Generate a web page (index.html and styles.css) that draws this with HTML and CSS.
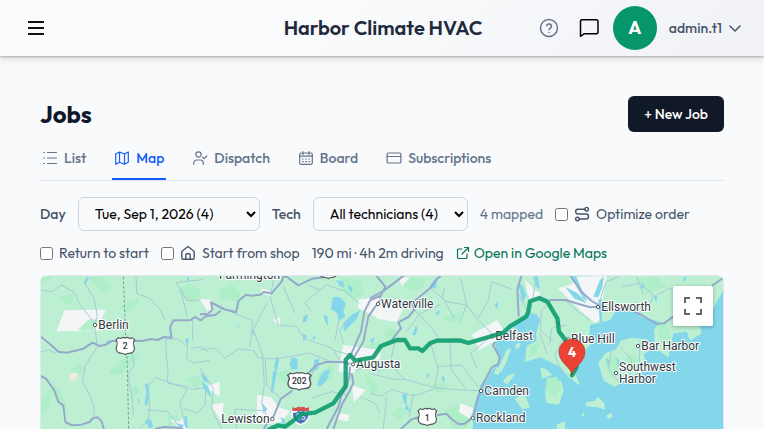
FILE: index.html
```html
<!DOCTYPE html>
<html lang="en">
<head>
<meta charset="utf-8">
<meta name="viewport" content="width=device-width, initial-scale=1">
<title>Jobs - Harbor Climate HVAC</title>
<link rel="stylesheet" href="styles.css">
</head>
<body>
<header class="topbar">
  <button class="icon-btn menu-btn" type="button" aria-label="Menu">
    <svg width="24" height="24" viewBox="0 0 24 24" fill="none" stroke="currentColor" stroke-width="2"><path d="M4 6h16M4 12h16M4 18h16"/></svg>
  </button>
  <div class="brand">Harbor Climate HVAC</div>
  <div class="account">
    <button class="icon-btn help" type="button" aria-label="Help">
      <svg width="20" height="20" viewBox="0 0 24 24" fill="none" stroke="currentColor" stroke-width="1.8" stroke-linecap="round" stroke-linejoin="round"><circle cx="12" cy="12" r="10.2"/><path d="M9 9.200a3.100 3.100 0 0 1 6 1c0 2-3 2.300-3 4M12 17.400h.01"/></svg>
    </button>
    <button class="icon-btn chat" type="button" aria-label="Messages">
      <svg width="24" height="24" viewBox="0 0 24 24" fill="none" stroke="currentColor" stroke-width="1.500" stroke-linejoin="round"><path d="M21 16.300a1.500 1.500 0 0 1-1.500 1.500H7L3.500 20.300V5.300A1.500 1.500 0 0 1 5 3.800h14.500A1.500 1.500 0 0 1 21 5.300z"/></svg>
    </button>
    <span class="avatar">A</span>
    <button class="user" type="button">admin.t1
      <svg width="14" height="14" viewBox="0 0 14 14" fill="none" stroke="currentColor" stroke-width="1.500" stroke-linecap="round" stroke-linejoin="round"><path d="M2 5l5 5 5-5"/></svg>
    </button>
  </div>
</header>

<main class="page">
  <div class="page-head">
    <h1>Jobs</h1>
    <button class="new-job" type="button">+ New Job</button>
  </div>

  <nav class="tabs">
    <a class="tab" href="#list">
      <svg class="icon" viewBox="0 0 14 14"><path d="M4.500 1.500h9M4.500 7h9M4.500 12.500h9M.7 1.500h.8M.7 7h.8M.7 12.500h.8"/></svg>List</a>
    <a class="tab active" href="#map" aria-current="page">
      <svg class="icon" viewBox="0 0 14 14"><path d="M.7 3L4.500 1l5 2 3.800-2v10.200L9.500 13.200l-5-2L.7 13.200zM4.500 1v10.200M9.500 3v10.200"/></svg>Map</a>
    <a class="tab" href="#dispatch">
      <svg class="icon" viewBox="0 0 14 14"><circle cx="5.500" cy="3.500" r="2.700"/><path d="M.7 13.300V12a3 3 0 0 1 3-3h3.600a3 3 0 0 1 3 3v1.300M9.600 6.200l1.500 1.500 2.700-2.700"/></svg>Dispatch</a>
    <a class="tab" href="#board">
      <svg class="icon" viewBox="0 0 14 14"><rect x=".7" y="2" width="12.600" height="11.300" rx="1.300"/><path d="M.7 5.200h12.600M4 .5v3M10 .5v3M3.500 8h.6M6.700 8h.6M9.900 8h.6M3.500 10.700h.6M6.700 10.700h.6M9.900 10.700h.6"/></svg>Board</a>
    <a class="tab" href="#subscriptions">
      <svg class="icon" viewBox="0 0 14 14"><rect x=".1" y="2" width="13.800" height="10" rx="1.300"/><path d="M.1 5.500h13.800"/></svg>Subscriptions</a>
  </nav>

  <form class="filters">
    <div class="field"><label for="day">Day</label>
      <select id="day" class="day"><option>Tue, Sep 1, 2026 (4)</option></select></div>
    <div class="field"><label for="tech">Tech</label>
      <select id="tech" class="tech"><option>All technicians (4)</option></select></div>
    <span class="muted">4 mapped</span>
    <label class="check"><input type="checkbox">
      <svg class="icon" viewBox="0 0 14 14"><circle cx="11.600" cy="2.200" r="1.800"/><circle cx="2.400" cy="12" r="1.800"/><path d="M9.800 2.200H3a2.400 2.400 0 0 0 0 4.800h8a2.500 2.500 0 0 1 0 5H4.200"/></svg>
      <span>Optimize order</span></label>
    <label class="check"><input type="checkbox"><span>Return to start</span></label>
    <label class="check"><input type="checkbox">
      <svg class="icon" viewBox="0 0 14 14"><path d="M.8 5.500L7 .5l6.200 5v6.500a1.300 1.300 0 0 1-1.300 1.300H2.100A1.300 1.300 0 0 1 .8 12zM4.800 13.300V8.700a1 1 0 0 1 1-1h2.400a1 1 0 0 1 1 1v4.600"/></svg>
      <span>Start from shop</span></label>
    <span class="driving">190 mi · 4h 2m driving</span>
    <a class="maps-link" href="#google-maps">
      <svg width="14" height="14" viewBox="0 0 14 14" fill="none" stroke="currentColor" stroke-width="1.200" stroke-linecap="round" stroke-linejoin="round"><path d="M8.500 1.500h4v4M12.500 1.500L6 8M6 3H2.500a1 1 0 0 0-1 1v7.500a1 1 0 0 0 1 1H10a1 1 0 0 0 1-1V8"/></svg>Open in Google Maps</a>
  </form>

  <section class="map" aria-label="Map">
    <svg class="map-canvas" viewBox="33 18 2046 440" preserveAspectRatio="xMinYMin meet">
      <defs>
        <g id="us-shield"><path d="M-21-25q5 4 10 1 6-4 11 0 6-4 11 0 5 3 10-1l7 7q-6 7-3 15 5 12-1 20-5 5-13 5-8 0-11 4-4-4-11-4-8 0-13-5-6-8-1-20 3-8-3-15z" fill="#fff" stroke="#555b60" stroke-width="3.500"/></g>
      </defs>
      <rect class="land" x="-100" y="-100" width="3000" height="2000"/>

      <!-- forest shading -->
      <g class="forest">
        <path d="M33 21h38l-15 12-23 8zM170 20h50l25 30-20 25-38-40zM90 82l38-12 6 22-26 12zM270 110l25-15 35-12-8 25-35 20zM50 365l25-20 18 20 15 35-25 5-8-25zM236 305l45-40 30-20 15 22-30 18-20 27-30 3zM33 385l30-10-5 40-25 20zM120 300l25-18 25 5-18 25-32 8z"/>
        <path d="M440 60l40-20 35 20-20 40-30-15zM470 330l30-15 20 25-22 16zM413 440l32-10-5 30-26 10zM300 360l20-15 10 20-20 14z"/>
        <g transform="translate(510)"><path d="M53 60l40-20 30 30-12 30-25-15-20 5zM420 20l60 12 15 40-38 15-30-24zM495 230l45-20v60l-40 10zM350 320l30-30 24-5-8 35-35 25zM230 310l30-12 20 28-30 12zM490 310l28 15 22 28-25 22z"/></g>
        <g transform="translate(1020)"><path d="M90 20l80 4-16 35-50-3zM40 185l24-14 23 25-35 20zM220 140l55-16-4 22-37 15zM180 350l32-14 25 15-26 19zM225 420l50-20 35 35-20 42h-45zM60 430l30-20 20 20-20 22z"/></g>
      </g>

      <!-- towns -->
      <g class="urban">
        <path d="M103 121l126-2-20 35-5 29-124 1zM511 87l32 3v38z"/>
        <g transform="translate(510)"><path d="M0 88l32 2-8 36zM185 55l33 10-8 12-28-8zM219 150l22-10-2 28zM474 90l66-12v67l-65-30zM430 225l110 15v28l-70 18-8 24-47-6zM15 350l45-15-2 45zM33 405l38-7-5 60zM172 374l42 8 20 28 36 14-28 32-52 8-20-30zM455 345l42 15-35 37zM415 430l33 4-5 20-28-5z"/></g>
        <g transform="translate(1020)"><path d="M0 90l40-5 58 36-18 35-58-10zM85 22h35l-24 27zM306 193l75-42 28 42-80 47zM270 400l40 15-10 30-33-18z"/></g>
        <path d="M420 448l28 8 17-20 8 41h-25z"/>
      </g>
      <path d="M177 148l30 2-18 34-16-4-12 4-18-4z" fill="#b4eecb"/>
      <path d="M122 307l22 3-7 23-20-2z" fill="#efe9df"/>

      <!-- sea -->
      <path class="water" d="M1510 88l-5 40-20 15-25 15-35 35-30 25 3 25 14 30-27 30-25 45-20 30-10 40-15 500h1500V18h-700z"/>
      <!-- coast and islands -->
      <g class="land" transform="translate(1530)">
        <path d="M-60 0H800V18H550V60L520 115 470 135 485 190 450 212 440 185 400 190 385 262 345 235 342 180 360 155 300 140 285 120 262 125 235 110 210 150 175 160 150 165 148 200 160 215 140 235 130 270 110 290 105 310 120 347 85 320 60 290 20 270 0 262-45 276-40 228-10 213-12 190 0 150-10 133-25 128-20 95-10 70-60 60z"/>
        <path d="M175 278l22-28 32-12 13-26 32-9 45 5 18 24-26 22 14 42-35 15-28 15-38 24-33-18zM140 397l25-5 8-12 20 20 2 20-20-8-38-3zM200 436l14-8 4 12-14 8zM124 434l8-6 2 14zM25 325l38 8 8 28-14 43-38-6-4-36zM50 464l24-10 3 50-25-6zM345 285l16 5-6 14zM0 293l15 3 22 18-30 12z"/>
        <path d="M-100 240l14-5-16 44-14 26-12-5 14-28zM-132 293l18-4-10 26-14-4zM-98 318l26-10-26 36-14-10zM-76 388l28-22 18 46-22 6zM-95 188l14-18 8 8-10 22zM-75 228l12-12 4 12-12 10z"/>
      </g>
      <g class="forest" transform="translate(1530)">
        <path d="M20 325l30-5 15 26-17 35-31-14zM190 270l40-14 8 37-28 25zM250 265l30-15 22 20-15 30-30-10zM350 165l30-12 12 47-28 25zM455 80l42-12-6 30-24 14zM-30 225l30-8-8 32-24 12zM290 25l60-5 30 30-60 20z"/>
      </g>
      <g class="urban">
        <path d="M1585 55l40-12 20-23 85-2-8 45-7 38 4 45-25 12-35-28-45-45zM1484 28l32 34 16 8-12 18-20 2-8-24z"/>
      </g>

      <!-- lakes and rivers -->
      <g class="water">
        <path d="M160 38l12-16h6l-10 20zM345 343l10-5 4 38-9 34-6-10 5-30zM344 450l18-2 8 20-12 8zM322 380l6 9 1 22zM465 210l12-8-4 26zM462 438h8l4 35h-8zM470 20l8 4-5 15zM433 458l30 8-8 8zM515 335l20 15 10 35-24-28zM228 214l14-5-2 8-14 5z"/>
        <g transform="translate(510)"><path d="M408 30l22 4 2 20-12-6zM442 45l18 8-8 16zM398 82l20-2 20 20-8 22 6 18-20 14-5-25-18-12zM370 135l12 3 2 30-8-12zM430 160l24-25 28-16-12 28-38 38zM310 140l14-8-4 20-12 8zM308 190l14 8-12 18zM335 205l12-10-2 14zM275 262l18 5v30l-18 2-6-16zM230 260l8 6-10 50-5-30zM220 300l10 10-12 60-6-5zM342 270l16-5-3 32-15 8zM350 345l18-38 22-10-10 35-20 18zM510 210l15-8-8 20zM0 307l20 18 6 14-15-5zM187 400l15 18-12 12zM242 440l14 10-5 28zM155 185l6-5 2 20zM110 170l12-8-8 12z"/></g>
        <g transform="translate(1020)"><path d="M183 42l19-22-4 35h-18zM374 105l12-12-4 24zM196 128l14-8-4 17zM127 195l10-28 6 8-6 20zM95 375l16-5-2 38-7-12zM213 315l12 10-4 18zM330 350l10-18 2 16zM443 40l14 5 12 30-10 22zM103 415l10-10 8 24zM490 20l8 30 12 8-7-40zM170 310l8 6-9 9z"/></g>
        <g transform="translate(1530)"><path d="M75 50l38 20 28 30-38-14zM95 22l12-4 35 75-12-7zM160 80l20-50 12-12-5 34-12 30zM175 88h12v70h-8zM50 160l13-10-8 22zM340 75l12 3-3 22zM430 24l12-4-10 18zM300 50l12-10-2 17zM230 262l8 8-2 30zM198 262l10 10-4 18z"/></g>
      </g>

      <!-- minor roads -->
      <g class="road">
        <path d="M33 60l35 5 25-20 40 22 15 35 46 57M172 20l-8 20 28 45 10 50-8 30 8 65-35 55-10 50 25 45 10 35v20M318 20l2 50 40 15 30 35 17 33M408 207v40l6 55-2 33M510 90l-40 2-18-35-15-18 30-5 53-5M452 60l20 80M488 150v60M412 335l-35-12-24 28 6 60-5 40-25 25M410 335l62 22-22 40 15 70M412 340l55 8 20 10 40-6M460 415l40 15 25-25 2-50M408 207l35 0 30 22-4 36 20 14 50-8M485 235l30-5 22 20M353 420l60 5 40 52M305 245l8 40-20 30 12 60 5 60M33 245l25-5 20 10"/>
        <g transform="translate(510)"><path d="M33 95l70 35 55 22-8 80M210 80l25 85 55 5 22 35 85 30 28 45M220 30l-8 45M250 50l35 80M325 45l35 15 18-15 60 20 40 35M360 60l-45 38 18 25M0 240l45-6 30 30 40-27 48 5 10 20 45 5 55-8 55-10 60 24 65 6M200 100l-40 80 28 75 5 90-8 55 20 50M0 295l40 60-5 62 30 60M195 265l5 80 40 38M345 275l-20 85M400 240l50 15M430 220l-10-40 25-35M335 385l60-20 48 10M110 477l-5-60 85 5M470 300l40-15 30 20M480 380l45 20 15 30M405 210l12-60"/></g>
        <g transform="translate(1020)"><path d="M0 310l70 18 35 0 90 25 75 7 62 2M75 215l-15 65 45 50M180 215l24 80-10 60M240 210l4 90 42 55M204 290l70-5 50 65M175 50l55 45 60 10 35 45 50 50M225 50l-8 30 35 65M272 25l18 80-20 50M365 35l-10 55-30 55M365 35l60 22M362 200l-60 50 20 48M0 370l35 8 30-20 65 20 60-20M50 380l-10 97M130 370l-12 70M125 110l60 65 28 40M110 185l40-55 60-25M440 60l35 70M500 20l-12 65"/></g>
        <g transform="translate(1530)"><path d="M35 90l-30 30-5 60 40 35M80 165l-45 10-5 45M70 205l-25 50 20 50M180 90l18-55 40-15M245 50l55-10 40 35-10 30M290 20l20 55M350 75l40-20 25 15 15-22M215 240l-10 55 30 40M240 230l35 40-5 45M300 212l-2 70M75 90l40 35 35 25M0 190l20 60"/></g>
      </g>

      <!-- main roads -->
      <g class="highway">
        <path d="M33 200l30 25 22 20 25 3 50-12 28-18 20 10 20-4 15-10 25-3 70 2 25-6 20 3 18-9 24 2-5-30 10-22 50 0 16-10 16 10 15-12 30-5 15-12M33 318l15 8 25 35 12 35 15 10 6 50 20 10 28-2 25-8 10-12 14-2 12 12 7 26M375 477l25-6 45 2 15 4"/>
        <g transform="translate(510)"><path d="M0 133l25-2 12-12-4-22 37 20 38 10 8-35 22-18 15 3 28-3 10-8 24 4 30-35 5-15 10 0 35 26 42-20 35-4M192 477l10-20 20-20 20-50 35-25M328 306l20-20 30-10 60 0 10 8M448 265l35-80 10-60 18-35 29-12M460 265l30-50 15-75 35-50M450 290l-2 30-8 30-15 25-10 35-35 67M455 310l5 30-15 30-20 35-25 72"/></g>
        <g transform="translate(1020)"><path d="M0 85l42-23 60-46M20 18l26 32-18 35M65 210l28-35-8-18 30-16 18-22-7-20 55-45 20-28 12-8M93 477l30-28 25-8M200 436l28-5 20 18 18 14 18-2 24-18 25-90 32-60 20-12 4-20-20-35 6-10M454 18l-12 40 4 82"/></g>
        <g transform="translate(1530)"><path d="M92 18l30 45 33 30 18 10 0 12M28 90l50 0 38 12 35 10 22-2M180 112l95 8 35 18 40 24 22-2 28-20M515 48l33-23"/></g>
      </g>
      <path d="M280 20l7 180 5 90 4 190" fill="none" stroke="#7b9b8f" stroke-width="3" stroke-dasharray="8 6"/>

      <!-- road shields -->
      <use href="#us-shield" x="286" y="228"/>
      <use href="#us-shield" x="1192" y="441"/>
      <use href="#us-shield" transform="translate(808 334) scale(1.250 1)"/>
      <use href="#us-shield" x="895" y="0"/>
      <path d="M787 424q8 5 14-1 5-4 11 0 6-4 11 0 6 6 14 1 5 28-25 40-30-12-25-40z" fill="#4277bd" stroke="#fff" stroke-width="4"/>
      <path d="M787 411q8 6 14 1 5-4 11 0 6-4 11 0 6 5 14-1v12h-50z" fill="#d65353"/>
      <g class="shield-text"><text x="286" y="237">2</text><text x="1192" y="452">1</text><text x="808" y="343">202</text></g>
      <text x="812" y="451" fill="#fff" opacity=".7" font-size="26" font-weight="700" text-anchor="middle">95</text>

      <!-- places -->
      <g class="dots"><circle cx="195" cy="165" r="5"/><circle cx="727" cy="447" r="5"/><circle cx="969" cy="283" r="5"/><circle cx="1044" cy="102" r="5"/><circle cx="1387" cy="199" r="5"/><circle cx="1353" cy="363" r="5"/><circle cx="1328" cy="444" r="5"/><circle cx="1704" cy="111" r="5"/><circle cx="1615" cy="208" r="5"/><circle cx="1824" cy="228" r="5"/><circle cx="1758" cy="309" r="5"/></g>
      <g class="places">
        <text x="205" y="178">Berlin</text><text x="567" y="26">Farmington</text><text x="574" y="459">Lewiston</text><text x="978" y="295">Augusta</text><text x="1053" y="114">Waterville</text><text x="1396" y="211">Belfast</text><text x="1363" y="375">Camden</text><text x="1338" y="456">Rockland</text><text x="1714" y="123">Ellsworth</text><text x="1623" y="220">Blue Hill</text><text x="1834" y="240">Bar Harbor</text><text><tspan x="1767" y="304">Southwest</tspan><tspan x="1767" y="340">Harbor</tspan></text>
      </g>

      <!-- driving route -->
      <path class="route" d="M690 500L720 477 745 466 765 470 790 452 815 432 855 428 910 400 947 348 947 270 960 255 975 272 1030 262 1053 228 1100 210 1125 210 1140 235 1165 235 1177 243 1200 220 1220 212 1290 211 1315 219 1380 200 1420 188 1440 169 1488 140 1495 126 1500 94 1528 84 1552 95 1582 145 1587 185 1605 208 1640 290 1635 300 1626 316"/>

      <path d="M1626 314c-4-24-39-36-39-69a39 37 0 0 1 78 0c0 33-35 45-39 69z" fill="#ea4335" stroke="#b3261e" stroke-width="2"/>
      <text class="pin-label" x="1626" y="261">4</text>
    </svg>
    <button class="fullscreen" type="button" aria-label="Toggle fullscreen view">
      <svg width="18" height="18" viewBox="0 0 18 18" fill="none" stroke="#666" stroke-width="2"><path d="M1 6V1h5M12 1h5v5M17 12v5h-5M6 17H1v-5"/></svg>
    </button>
  </section>
</main>
</body>
</html>
```
FILE: styles.css
```css
* { box-sizing: border-box; }

body {
  margin: 0;
  height: 100vh;
  display: flex;
  flex-direction: column;
  overflow: hidden;
  background: #f9fafc;
  color: #0f172a;
  font: 14px/20px Outfit, Lato, sans-serif;
}

button, select, input { font: inherit; }
button { border: 0; padding: 0; background: none; color: inherit; }
a { text-decoration: none; }

.topbar {
  flex: none;
  display: grid;
  grid-template-columns: 1fr auto 1fr;
  align-items: center;
  height: 56px;
  padding: 0 22px 0 24px;
  background: linear-gradient(135deg, #fafbfc 40%, #f1f2f6);
  box-shadow: 0 1px 2px rgba(0, 0, 0, .25), 0 3px 8px rgba(0, 0, 0, .12);
}

.icon-btn { display: flex; }
.menu-btn { justify-self: start; color: #111; }
.brand { font-size: 20px; line-height: 28px; font-weight: 600; color: #1e293b; }
.account { justify-self: end; display: flex; align-items: center; }
.help { color: #64748b; margin-right: 18px; }
.chat { color: #000; margin-right: 12px; }

.avatar {
  display: grid;
  place-items: center;
  width: 44px;
  height: 44px;
  margin-right: 12px;
  border-radius: 50%;
  background: #059669;
  color: #fff;
  font-size: 18px;
  font-weight: 700;
}

.user { display: flex; align-items: center; gap: 6px; color: #475569; font-weight: 500; }

.page { flex: 1; min-height: 0; display: flex; flex-direction: column; padding: 40px 40px 0; }
.page-head { display: flex; justify-content: space-between; align-items: center; }
h1 { margin: 0; font-size: 24px; line-height: 32px; font-weight: 700; }

.new-job {
  height: 36px;
  padding: 0 16px;
  border-radius: 6px;
  background: #111827;
  color: #fff;
  font-weight: 500;
}

.tabs { display: flex; gap: 24px; margin-top: 4px; border-bottom: 1px solid #e2e5ec; }

.tab {
  display: flex;
  align-items: center;
  gap: 6px;
  height: 44px;
  padding: 2px 2px 0;
  border-bottom: 2px solid transparent;
  color: #64748b;
  font-weight: 500;
}

.tab.active { color: #155dfc; border-color: #155dfc; }

.icon {
  flex: none;
  width: 14px;
  height: 14px;
  margin: 0 1px;
  overflow: visible;
  fill: none;
  stroke: currentColor;
  stroke-width: 1.2;
  stroke-linecap: round;
  stroke-linejoin: round;
}

.filters { display: flex; flex-wrap: wrap; align-items: center; gap: 12px; margin: 16px 0 12px; color: #475569; }
.field { display: flex; align-items: center; gap: 12px; font-weight: 500; }

select {
  height: 34px;
  padding: 0 0 0 12px;
  border: 1px solid #cbd5e1;
  border-radius: 6px;
  background: #f9fafc;
  color: #000;
  font-weight: 400;
}

.day { width: 182px; }
.tech { width: 155px; }
.muted { color: #64748b; }
.check { display: flex; align-items: center; gap: 6px; }
.check input { width: 13px; height: 13px; margin: 0; }
.check .icon { stroke-width: 1.4; }
.maps-link { display: flex; align-items: center; gap: 4px; color: #047857; }

.map {
  position: relative;
  flex: 1;
  min-height: 0;
  overflow: hidden;
  border: 1px solid #e2e8f0;
  border-bottom: 0;
  border-radius: 6px 6px 0 0;
}

.map-canvas { display: block; width: 100%; height: 100%; font-family: Roboto, sans-serif; }
.land { fill: #bdf0d3; }
.forest { fill: #aeeec8; }
.urban { fill: #f4f5f6; }
.water { fill: #84d7eb; }
.road { fill: none; stroke: #a9c9d6; stroke-width: 3; stroke-linejoin: round; }
.highway { fill: none; stroke: #97a9cb; stroke-width: 6; stroke-linejoin: round; }
.route { fill: none; stroke: #059669; stroke-opacity: .85; stroke-width: 13; stroke-linejoin: round; stroke-linecap: round; }
.dots { fill: #fff; stroke: #555d63; stroke-width: 3; }
.places { fill: #2f373d; stroke: #fff; stroke-width: 6; stroke-linejoin: round; paint-order: stroke; font-size: 36px; }
.shield-text { fill: #333; font-size: 26px; font-weight: 500; text-anchor: middle; }
.pin-label { fill: #fff; font-family: Outfit, sans-serif; font-size: 40px; font-weight: 700; text-anchor: middle; }

.fullscreen {
  position: absolute;
  top: 10px;
  right: 10px;
  display: grid;
  place-items: center;
  width: 40px;
  height: 40px;
  border-radius: 2px;
  background: #fff;
  box-shadow: 0 1px 4px rgba(0, 0, 0, .3);
}
```
